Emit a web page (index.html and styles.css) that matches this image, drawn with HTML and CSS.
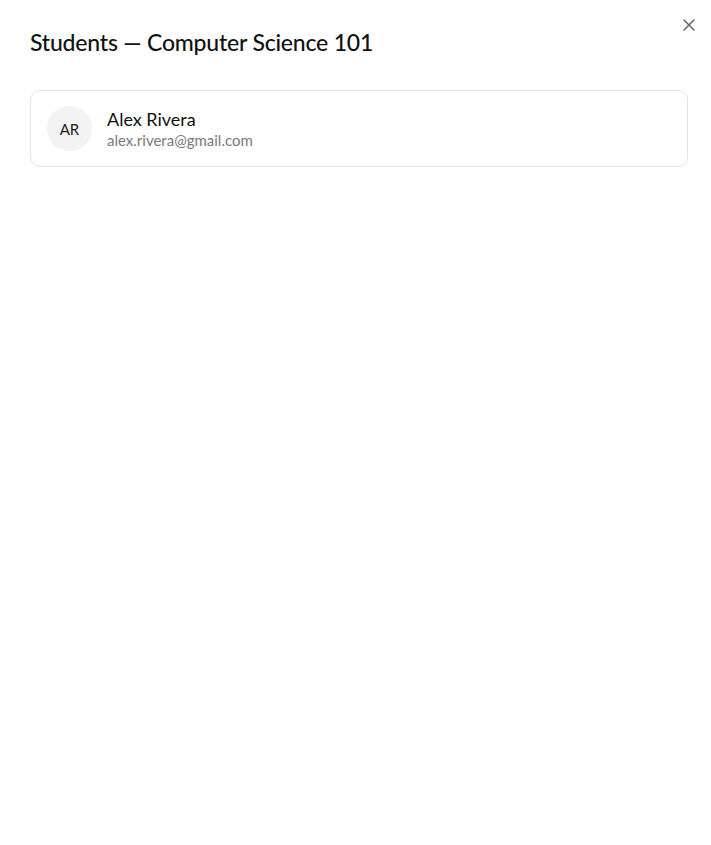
FILE: index.html
```html
<!DOCTYPE html>
<html lang="en">
<head>
  <meta charset="UTF-8">
  <title>Students</title>
  <link rel="stylesheet" href="styles.css">
</head>
<body>
<div class="dialog">
  <div class="dialog-header">
    <h2>Students — Computer Science 101</h2>
    <button class="close" aria-label="Close">
      <svg width="14" height="14" viewBox="0 0 14 14"><path d="M2 2L12 12M12 2L2 12" stroke="#6b6b6b" stroke-width="1.6" stroke-linecap="round"/></svg>
    </button>
  </div>

  <div class="student-list">
    <div class="student">
      <div class="avatar">AR</div>
      <div class="info">
        <div class="name">Alex Rivera</div>
        <div class="email">alex.rivera@gmail.com</div>
      </div>
    </div>
  </div>
</div>
</body>
</html>
```

FILE: styles.css
```css
body {
  margin: 0;
  font-family: Lato, "Noto Sans", sans-serif;
  color: #111;
  background: #fff;
}
.dialog {
  padding: 24px 23px 30px 30px;
}
.dialog-header {
  display: flex;
  justify-content: space-between;
  align-items: flex-start;
}
.dialog-header h2 {
  margin: 4px 0 0;
  font-size: 23px;
  font-weight: 500;
  letter-spacing: -0.2px;
}
.close {
  background: none;
  border: none;
  padding: 0;
  margin-top: -8px;
  margin-right: -10px;
  width: 18px;
  height: 18px;
  display: flex;
  align-items: center;
  justify-content: center;
  cursor: pointer;
}
.student-list {
  margin-top: 34px;
}
.student {
  display: flex;
  align-items: center;
  gap: 15px;
  padding: 15px 16px;
  border: 1px solid #e4e4e4;
  border-radius: 10px;
}
.avatar {
  width: 45px;
  height: 45px;
  border-radius: 50%;
  background: #f3f3f3;
  display: flex;
  align-items: center;
  justify-content: center;
  font-size: 15px;
  color: #222;
}
.name {
  font-size: 18px;
  line-height: 22px;
}
.email {
  font-size: 15px;
  color: #7a7a7a;
  line-height: 20px;
}
```
